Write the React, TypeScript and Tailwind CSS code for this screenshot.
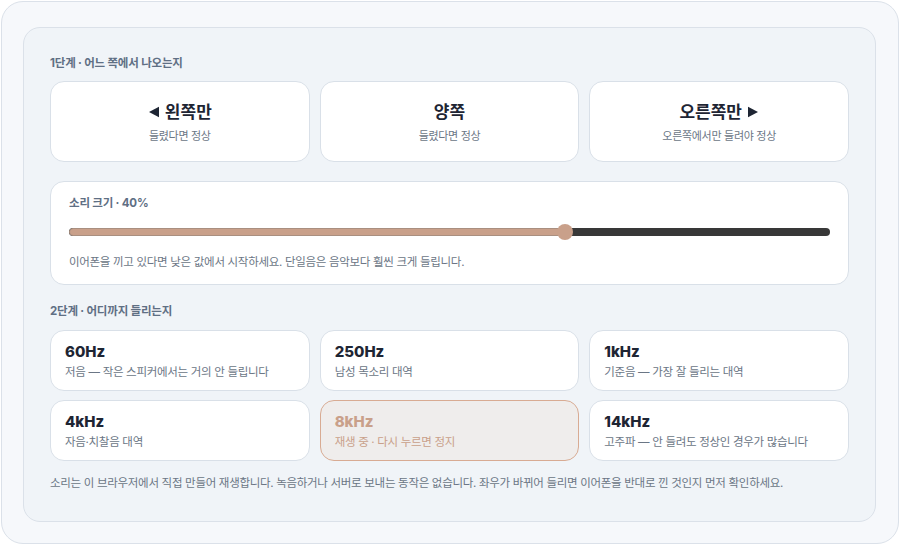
import { useState } from 'react';

const FONT = 'font-["Inter","Noto_Sans_CJK_KR",sans-serif]';

type Side = 'left' | 'both' | 'right';

const sides: { id: Side; title: string; note: string }[] = [
  { id: 'left', title: '왼쪽만', note: '들렸다면 정상' },
  { id: 'both', title: '양쪽', note: '들렸다면 정상' },
  { id: 'right', title: '오른쪽만', note: '오른쪽에서만 들려야 정상' },
];

const tones = [
  { id: '60', label: '60Hz', note: '저음 — 작은 스피커에서는 거의 안 들립니다' },
  { id: '250', label: '250Hz', note: '남성 목소리 대역' },
  { id: '1k', label: '1kHz', note: '기준음 — 가장 잘 들리는 대역' },
  { id: '4k', label: '4kHz', note: '자음·치찰음 대역' },
  { id: '8k', label: '8kHz', note: '다시 누르면 정지' },
  { id: '14k', label: '14kHz', note: '고주파 — 안 들려도 정상인 경우가 많습니다' },
];

function Arrow({ dir }: { dir: 'left' | 'right' }) {
  return (
    <svg width="12" height="12" viewBox="0 0 12 12" className="shrink-0">
      {dir === 'left' ? <path d="M1 6 L11 0.8 L11 11.2 Z" fill="#1e2533" /> : <path d="M11 6 L1 0.8 L1 11.2 Z" fill="#1e2533" />}
    </svg>
  );
}

export default function App() {
  const [playing, setPlaying] = useState<string | null>('8k');
  const volume = 40;
  const knob = 65.2;

  return (
    <div className={`${FONT} w-[900px] h-[545px] p-px`}>
      <div className="h-[543px] w-[898px] rounded-[22px] border border-[#dbe1e9] bg-[#f6f8fb] pl-[21px] pr-[21px] pt-[25px]">
        <div className="h-[495px] w-[853px] rounded-[17px] border border-[#dbe1e9] bg-[#f0f4f8] px-[26px] pt-[27px]">
          <div className="text-[11.5px] leading-[16px] font-bold tracking-[-0.2px] text-[#5f6f84]">1단계 · 어느 쪽에서 나오는지</div>

          <div className="mt-[10px] grid grid-cols-3 gap-[10px]">
            {sides.map((s) => (
              <button
                key={s.id}
                className="flex h-[81px] flex-col items-center justify-center gap-[4px] rounded-[14px] border border-[#d9e0e8] bg-white"
              >
                <div className="flex items-center gap-[5px] text-[17px] leading-[24px] font-bold text-[#1e2533]">
                  {s.id === 'left' && <Arrow dir="left" />}
                  <span>{s.title}</span>
                  {s.id === 'right' && <Arrow dir="right" />}
                </div>
                <div className="text-[11px] leading-[16px] tracking-[-0.3px] text-[#6b7685]">{s.note}</div>
              </button>
            ))}
          </div>

          <div className="mt-[19px] h-[104px] rounded-[14px] border border-[#d9e0e8] bg-white px-[18px] pt-[13px]">
            <div className="text-[11.5px] leading-[16px] font-bold tracking-[-0.2px] text-[#5f6f84]">소리 크기 · {volume}%</div>
            <div className="relative mt-[13px] h-[16px]">
              <div className="absolute left-0 right-0 top-[4px] h-[8px] rounded-full bg-[#383838]" />
              <div
                className="absolute left-0 top-[4px] h-[8px] rounded-l-full border border-[#a98f80] bg-[#c9a08a]"
                style={{ width: `${knob}%` }}
              />
              <div
                className="absolute top-0 h-[16px] w-[16px] -translate-x-1/2 rounded-full bg-[#c9a08a]"
                style={{ left: `${knob}%` }}
              />
            </div>
            <div className="mt-[14px] text-[11.5px] leading-[16px] tracking-[-0.3px] text-[#6b7685]">
              이어폰을 끼고 있다면 낮은 값에서 시작하세요. 단일음은 음악보다 훨씬 크게 들립니다.
            </div>
          </div>

          <div className="mt-[18px] text-[11.5px] leading-[16px] font-bold tracking-[-0.2px] text-[#5f6f84]">2단계 · 어디까지 들리는지</div>

          <div className="mt-[11px] grid grid-cols-3 gap-x-[10px] gap-y-[9px]">
            {tones.map((t) => {
              const on = playing === t.id;
              return (
                <button
                  key={t.id}
                  onClick={() => setPlaying(on ? null : t.id)}
                  className={
                    on
                      ? 'flex h-[61px] flex-col justify-start rounded-[14px] border border-[#d8ab93] bg-[#efedec] px-[14px] pt-[10px] text-left'
                      : 'flex h-[61px] flex-col justify-start rounded-[14px] border border-[#d9e0e8] bg-white px-[14px] pt-[10px] text-left'
                  }
                >
                  <div className={on ? 'text-[15px] leading-[21px] font-extrabold text-[#c9a08a]' : 'text-[15px] leading-[21px] font-extrabold text-[#1e2533]'}>
                    {t.label}
                  </div>
                  <div className={on ? 'mt-[1px] text-[11.5px] leading-[18px] tracking-[-0.3px] text-[#c9a08a]' : 'mt-[1px] text-[11.5px] leading-[18px] tracking-[-0.3px] text-[#6b7685]'}>
                    {on ? '재생 중 · 다시 누르면 정지' : t.note}
                  </div>
                </button>
              );
            })}
          </div>

          <div className="mt-[13px] text-[11.5px] leading-[18px] tracking-[-0.3px] text-[#6b7685]">
            소리는 이 브라우저에서 직접 만들어 재생합니다. 녹음하거나 서버로 보내는 동작은 없습니다. 좌우가 바뀌어 들리면 이어폰을 반대로 낀 것인지 먼저 확인하세요.
          </div>
        </div>
      </div>
    </div>
  );
}
